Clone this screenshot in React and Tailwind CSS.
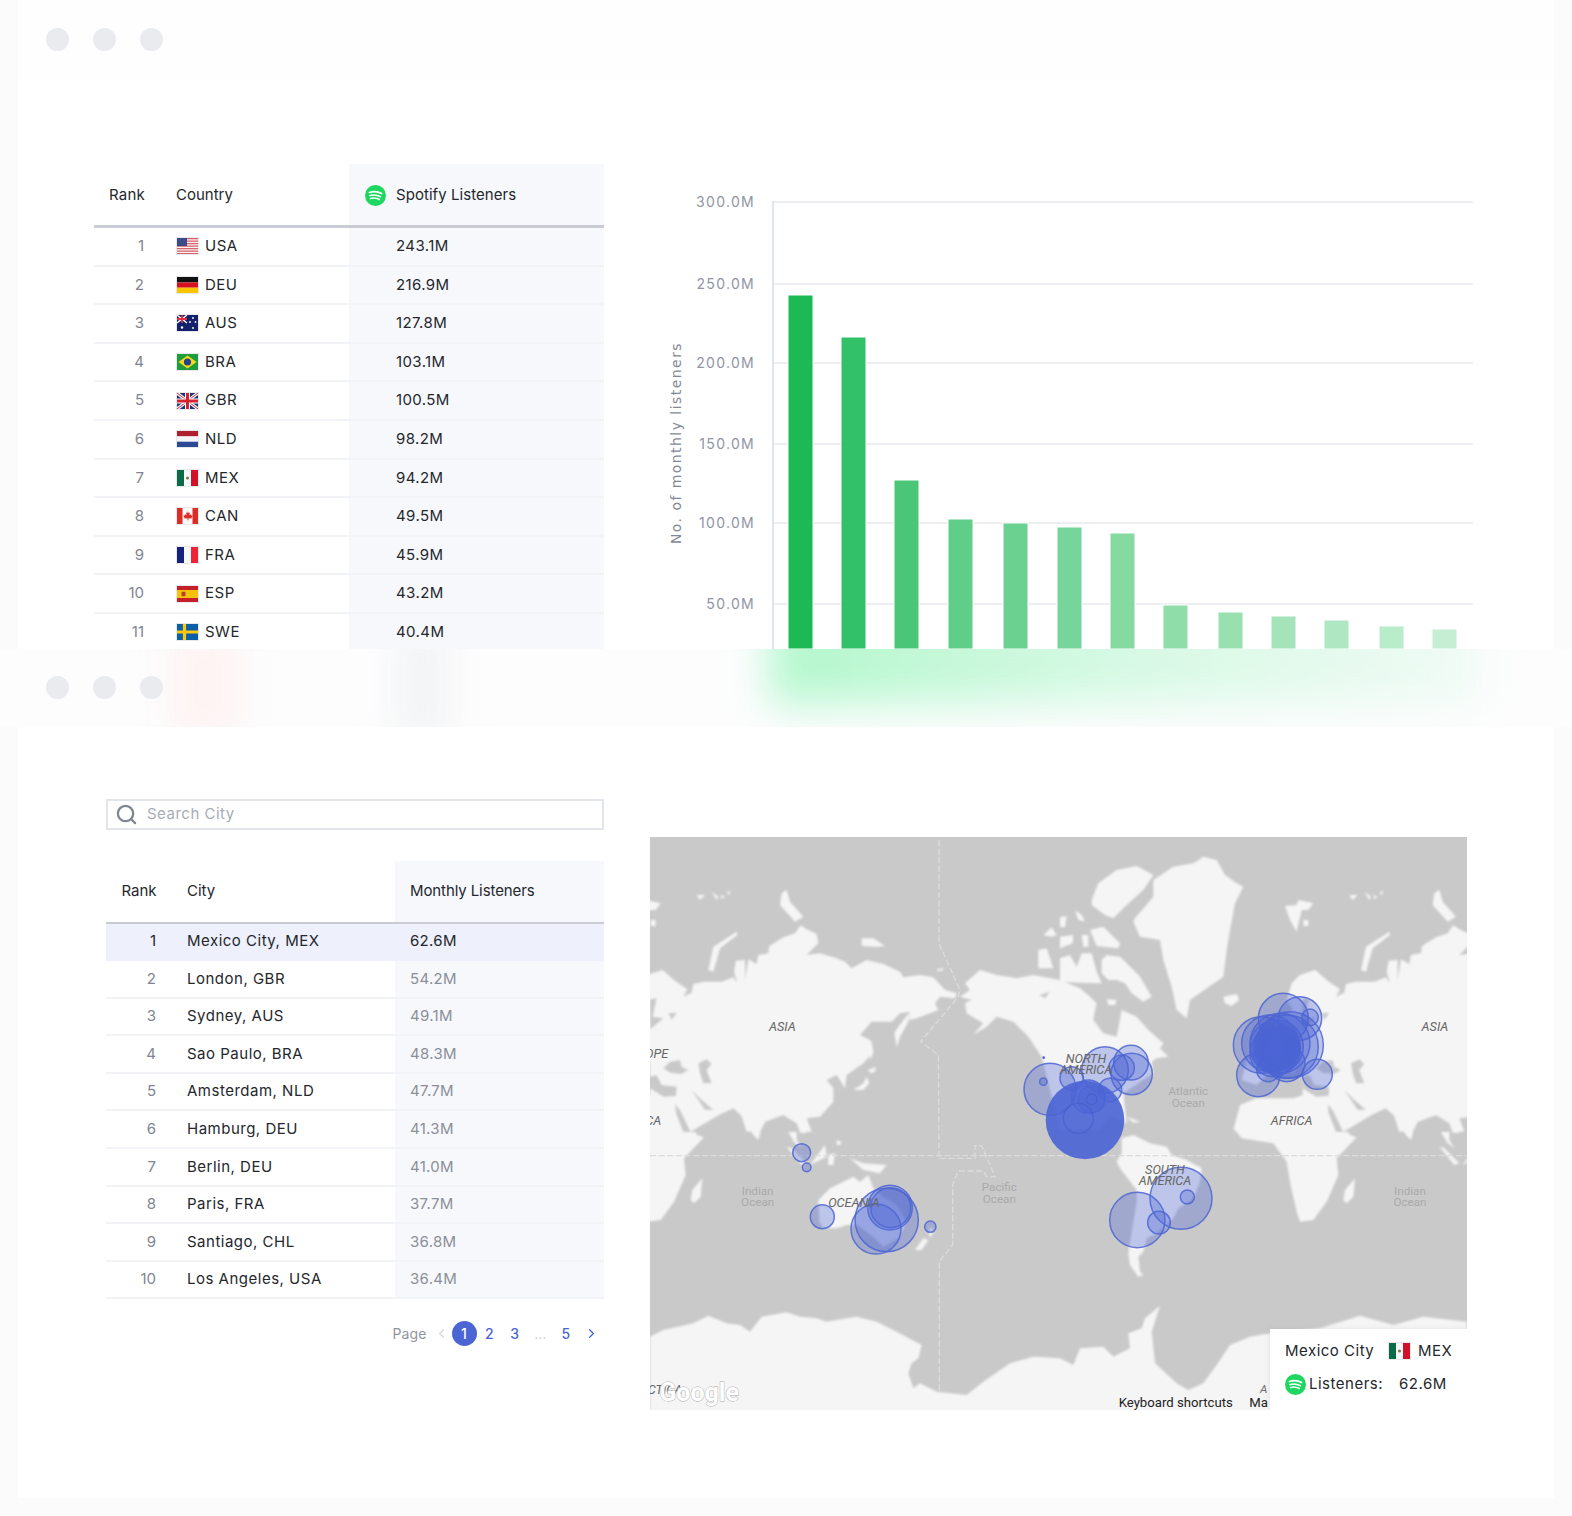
import React from 'react';
import { ChevronLeft, ChevronRight, Search } from 'lucide-react';

const COUNTRIES = [
  ['1', 'USA', '243.1M'], ['2', 'DEU', '216.9M'], ['3', 'AUS', '127.8M'], ['4', 'BRA', '103.1M'],
  ['5', 'GBR', '100.5M'], ['6', 'NLD', '98.2M'], ['7', 'MEX', '94.2M'], ['8', 'CAN', '49.5M'],
  ['9', 'FRA', '45.9M'], ['10', 'ESP', '43.2M'], ['11', 'SWE', '40.4M'],
];

const CITIES = [
  ['1', 'Mexico City, MEX', '62.6M'], ['2', 'London, GBR', '54.2M'], ['3', 'Sydney, AUS', '49.1M'],
  ['4', 'Sao Paulo, BRA', '48.3M'], ['5', 'Amsterdam, NLD', '47.7M'], ['6', 'Hamburg, DEU', '41.3M'],
  ['7', 'Berlin, DEU', '41.0M'], ['8', 'Paris, FRA', '37.7M'], ['9', 'Santiago, CHL', '36.8M'],
  ['10', 'Los Angeles, USA', '36.4M'],
];

// [x, top, colour] in page pixels
const BARS = [
  [788, 295, '#1cb954'], [841, 337, '#32c069'], [894, 480, '#4bc678'], [948, 519, '#5ece88'],
  [1003, 523, '#6bd190'], [1057, 527, '#76d59a'], [1110, 533, '#85daa2'], [1163, 605, '#8fdda9'],
  [1218, 612, '#98e0b0'], [1271, 616, '#a5e4ba'], [1324, 620, '#aee7c2'], [1379, 626, '#b8eccb'],
  [1432, 629, '#c5eed3'],
];

const TICKS = [[202, '300.0M'], [284, '250.0M'], [363, '200.0M'], [444, '150.0M'], [523, '100.0M'], [604, '50.0M']];

const Flag = ({ code }) => {
  const flags = {
    USA: (
      <>
        <rect width="21" height="16" fill="#f6f6f8" />
        {[0, 2.5, 5, 7.5, 10, 12.5].map((y) => <rect key={y} y={y} width="21" height="1.3" fill="#d9616c" />)}
        <rect y="15" width="21" height="1" fill="#d9616c" />
        <rect width="10" height="8" fill="#3d4c87" />
      </>
    ),
    DEU: (
      <>
        <rect width="21" height="5.4" fill="#111" />
        <rect y="5.4" width="21" height="5.3" fill="#d5121e" />
        <rect y="10.7" width="21" height="5.3" fill="#fbc400" />
      </>
    ),
    AUS: (
      <>
        <rect width="21" height="16" fill="#13206b" />
        <path d="M0 0l10 8M10 0L0 8" stroke="#fff" strokeWidth="1.4" />
        <path d="M5 0v8M0 4h10" stroke="#e0333f" strokeWidth="1.8" />
        <circle cx="5" cy="12.5" r="1.2" fill="#fff" />
        <circle cx="16" cy="3" r=".9" fill="#fff" />
        <circle cx="13" cy="7" r=".9" fill="#fff" />
        <circle cx="18.5" cy="7" r=".9" fill="#fff" />
        <circle cx="16" cy="13" r=".9" fill="#fff" />
      </>
    ),
    BRA: (
      <>
        <rect width="21" height="16" fill="#1f9d3d" />
        <path d="M10.5 1.5L19.5 8l-9 6.5L1.5 8z" fill="#f7d917" />
        <circle cx="10.5" cy="8" r="3.6" fill="#23418f" />
      </>
    ),
    GBR: (
      <>
        <rect width="21" height="16" fill="#1d3579" />
        <path d="M0 0l21 16M21 0L0 16" stroke="#fff" strokeWidth="3" />
        <path d="M0 0l21 16M21 0L0 16" stroke="#d5222f" strokeWidth="1" />
        <path d="M10.5 0v16M0 8h21" stroke="#fff" strokeWidth="5" />
        <path d="M10.5 0v16M0 8h21" stroke="#d5222f" strokeWidth="3" />
      </>
    ),
    NLD: (
      <>
        <rect width="21" height="5.4" fill="#ad1f2d" />
        <rect y="5.4" width="21" height="5.3" fill="#f5f5f7" />
        <rect y="10.7" width="21" height="5.3" fill="#2c4a94" />
      </>
    ),
    MEX: (
      <>
        <rect width="7" height="16" fill="#0c6b47" />
        <rect x="7" width="7" height="16" fill="#f8f8f8" />
        <rect x="14" width="7" height="16" fill="#d01128" />
        <circle cx="10.5" cy="8" r="1.6" fill="#93714a" />
      </>
    ),
    CAN: (
      <>
        <rect width="21" height="16" fill="#f8f8f8" />
        <rect width="5.5" height="16" fill="#dd2b25" />
        <rect x="15.5" width="5.5" height="16" fill="#dd2b25" />
        <path d="M10.5 3l1 2 1.4-.6-.5 2.8 1.6-1 .4 1.3 1.3.1-1 2-.3 1-3-.3.1 2h-1l.1-2-3 .3-.3-1-1-2 1.3-.1.4-1.3 1.6 1-.5-2.8 1.4.6z" fill="#dd2b25" />
      </>
    ),
    FRA: (
      <>
        <rect width="7" height="16" fill="#13237e" />
        <rect x="7" width="7" height="16" fill="#f8f8f8" />
        <rect x="14" width="7" height="16" fill="#ee2436" />
      </>
    ),
    ESP: (
      <>
        <rect width="21" height="16" fill="#c5202a" />
        <rect y="4" width="21" height="8" fill="#f5c20b" />
        <rect x="4.5" y="5.8" width="4" height="4.4" rx="1" fill="#b0442b" />
      </>
    ),
    SWE: (
      <>
        <rect width="21" height="16" fill="#0a5fa8" />
        <path d="M0 8h21M7.5 0v16" stroke="#fcc90f" strokeWidth="3.2" />
      </>
    ),
  };
  return (
    <svg width="21" height="16" viewBox="0 0 21 16" className="shrink-0 outline outline-1 outline-[#e8e9ec]">
      {flags[code]}
    </svg>
  );
};

const SpotifyIcon = ({ className }) => (
  <svg viewBox="0 0 21 21" className={className}>
    <circle cx="10.5" cy="10.5" r="10.5" fill="#1ed760" />
    <path d="M4.4 7.4c4-1.2 8.6-.9 12.2 1.1M5 10.6c3.4-1 7.3-.6 10.4 1.1M5.6 13.5c2.9-.8 6-.5 8.6 1" fill="none" stroke="#fff" strokeWidth="1.6" strokeLinecap="round" />
  </svg>
);

const WindowDots = () => (
  <div className="flex gap-[24px]">
    <span className="w-[23px] h-[23px] rounded-full bg-[#e9ebee]" />
    <span className="w-[23px] h-[23px] rounded-full bg-[#e9ebee]" />
    <span className="w-[23px] h-[23px] rounded-full bg-[#e9ebee]" />
  </div>
);

const CountryTable = () => (
  <div className="w-[510px] h-[485px] overflow-hidden text-[15px] text-[#24272c]">
    <div className="flex h-[64px] border-b-[3px] border-[#c9cdd3] items-stretch">
      <div className="w-[51px] text-right flex items-center justify-end pt-[2px] tracking-[0.2px]">Rank</div>
      <div className="w-[204px] pl-[31px] flex items-center pt-[2px]">Country</div>
      <div className="flex-1 bg-[#f7f8fc] flex items-center pl-[16px] gap-[10px] pt-[2px] tracking-[0.05px]">
        <SpotifyIcon className="w-[21px] h-[21px]" />
        <span>Spotify Listeners</span>
      </div>
    </div>
    {COUNTRIES.map(([rank, code, value]) => (
      <div key={code} className="flex h-[38.6px] border-b-2 border-[#f2f3f6] items-stretch">
        <div className="w-[50px] flex items-center justify-end text-[#7f8591]">{rank}</div>
        <div className="w-[205px] pl-[33px] flex items-center gap-[7px]">
          <Flag code={code} />
          <span className="tracking-[0.5px]">{code}</span>
        </div>
        <div className="flex-1 bg-[#f7f8fc] flex items-center pl-[47px] tracking-[0.4px]">{value}</div>
      </div>
    ))}
  </div>
);

const BarChart = () => (
  <svg width="840" height="479" viewBox="660 170 840 479" className="shrink-0 mt-[6px]">
    {TICKS.map(([y, label]) => (
      <g key={label}>
        <line x1="773" x2="1473" y1={y} y2={y} stroke="#eceef2" strokeWidth="2" />
        <text x="755" y={y + 5} textAnchor="end" fontFamily="Inter, sans-serif" fontSize="14" letterSpacing="1.3" fill="#8f95a3">{label}</text>
      </g>
    ))}
    <line x1="773" x2="773" y1="201" y2="649" stroke="#d5dcf0" strokeWidth="1.5" />
    {BARS.map(([x, top, color]) => (
      <rect key={x} x={x} y={top} width="25" height={649 - top} fill={color} stroke="#fff" strokeWidth="1" />
    ))}
    <text transform="translate(681 443) rotate(-90)" textAnchor="middle" fontFamily="'DejaVu Sans', sans-serif" fontSize="14" letterSpacing="1.45" fill="#838994">No. of monthly listeners</text>
  </svg>
);

const CityTable = () => (
  <div className="w-[498px] text-[15px] text-[#24272c]">
    <div className="flex h-[62.5px] border-b-2 border-[#c9cdd3] items-stretch">
      <div className="w-[50.5px] flex items-center justify-end">Rank</div>
      <div className="w-[238.5px] pl-[30.5px] flex items-center">City</div>
      <div className="flex-1 bg-[#f7f8fc] flex items-center pl-[15px] tracking-[-0.1px]">Monthly Listeners</div>
    </div>
    {CITIES.map(([rank, city, value], i) => (
      <div key={rank} className={`flex h-[37.6px] border-b-2 items-stretch ${i === 0 ? 'bg-[#eef0fb] border-[#eef0fb]' : 'border-[#f2f3f6]'}`}>
        <div className={`w-[50px] flex items-center justify-end ${i === 0 ? 'text-[#24272c]' : 'text-[#7f8591]'}`}>{rank}</div>
        <div className="w-[239px] pl-[31px] flex items-center tracking-[0.5px]">{city}</div>
        <div className={`flex-1 flex items-center pl-[15px] tracking-[0.3px] ${i === 0 ? 'text-[#24272c]' : 'bg-[#f7f8fc] text-[#8a8f98]'}`}>{value}</div>
      </div>
    ))}
  </div>
);

const Pagination = () => (
  <div className="flex items-center justify-end mt-[21px] h-[26px] text-[14px] font-medium text-[#4c65d4]">
    <span className="text-[#8f95a0] font-normal tracking-[0.1px] mr-[5px]">Page</span>
    <span className="w-[20px] flex justify-center text-[#d3d6dc]"><ChevronLeft size={15} /></span>
    <span className="w-[25px] h-[25px] rounded-full bg-[#4c65d4] text-white flex items-center justify-center">1</span>
    <span className="w-[25.5px] flex justify-center">2</span>
    <span className="w-[25.5px] flex justify-center">3</span>
    <span className="w-[25.5px] flex justify-center text-[#c9ced8] font-normal">...</span>
    <span className="w-[25.5px] flex justify-center">5</span>
    <span className="w-[25.5px] flex justify-center"><ChevronRight size={15} /></span>
  </div>
);

const LAND = '#f5f5f5';
const SEA = '#c9c9c9';

// everything below is in zoomed units: 3 units to a page pixel, origin at the map's top left
const Eurasia = () => (
  <g fill={LAND}>
    <path d="M0 405L40 392L70 420L112 448L100 470L125 458L130 432L160 425L215 425L250 412L262 430L252 395L258 362L285 360L285 420L295 358L320 372L325 345L355 340L358 318L400 292L435 280L452 256L470 268L500 282L505 310L470 345L510 340L560 355L585 365L605 385L650 360L700 372L750 395L760 412L810 405L850 412L885 450L920 460L915 475L870 470L855 490L865 510L800 535L778 540L780 515L750 520L725 545L665 545L630 585L660 600L670 635L640 670L590 705L585 745L560 705L530 720L550 745L550 785L510 830L470 835L485 875L0 875Z" />
    <path d="M780 515L775 545L750 590L740 622L733 578L745 560Z" />
    <path d="M655 690L678 680L675 695L660 700Z" />
    <path d="M650 710L658 730L640 750L610 750L640 730Z" />
    <path d="M657 600L665 605L670 640L660 660Z" />
    <path d="M175 390L190 320L260 275L262 285L210 325L190 395Z" />
    <path d="M395 160L410 150L420 185L460 230L435 245L390 195Z" />
    <path d="M635 295L670 295L705 318L680 320L635 318Z" />
    <path d="M860 388L880 385L878 392L862 393Z" />
    <path d="M140 165L165 165L150 180ZM185 155L205 170L200 180ZM212 165L225 170L215 178ZM232 155L242 152L235 168Z" />
    <path d="M405 855L470 855L480 865L465 880L440 875L440 900L455 925L435 910L420 885Z" />
    <path d="M280 835L345 835L335 865L325 900L310 885Z" />
    <path d="M410 920L425 925L470 970L455 975Z" />
    <path d="M480 975L525 915L530 950L490 970Z" />
    <path d="M535 945L555 940L550 975L535 975Z" />
    <path d="M560 900L575 905L570 915L560 915Z" />
    <path d="M600 955L640 970L710 975L690 1000L640 990Z" />
    <path d="M505 1080L540 1045L580 1025L610 1010L630 1025L655 1005L670 1045L700 1070L740 1095L770 1145L745 1195L700 1220L680 1200L650 1175L620 1155L590 1155L560 1165L520 1165L508 1145Z" />
    <path d="M795 1230L820 1195L835 1200L815 1230Z" />
    <path d="M838 1160L850 1165L845 1190L838 1190Z" />
  </g>
);

const EurasiaSeas = () => (
  <g fill={SEA}>
    <path d="M40 685L60 665L90 660L95 680L115 690L95 702L60 698Z" />
    <path d="M145 670L170 658L185 672L170 690L185 730L160 730L150 700Z" />
    <path d="M0 710L20 705L35 735L80 740L78 768L40 770L0 745Z" />
    <path d="M75 792L90 810L122 876L100 876L78 820Z" />
    <path d="M125 750L150 775L190 810L165 810L145 780Z" />
    <path d="M120 876L212 822L250 805L275 828L290 876Z" />
    <path d="M330 876L345 845L400 825L440 850L450 876Z" />
    <path d="M0 478L20 475L8 530L40 535L5 565L0 565Z" />
    <path d="M55 520L80 518L65 540Z" />
  </g>
);

const EuropeAfrica = () => (
  <g fill={LAND}>
    <path d="M695 430L720 405L765 390L800 420L838 450L815 465L775 450L745 470L740 500L700 510L680 480Z" />
    <path d="M700 510L760 480L800 490L830 470L860 470L860 700L780 690L760 660L730 660L700 700L640 690L590 735L545 720L560 660L620 620L650 540Z" />
    <path d="M490 470L530 462L538 480L515 498L495 490Z" />
    <path d="M675 198L710 195L715 180L760 190L745 210L725 210L710 275L690 240Z" />
    <path d="M730 240L745 240L745 258L730 258Z" />
    <path d="M520 870L540 795L590 775L700 775L745 760L800 790L850 855L870 885L890 892L830 955L835 1005L800 1085L760 1140L720 1145L710 1115L690 1025L680 965L640 910L610 905L545 895L525 870Z" />
    <path d="M855 1050L885 1015L880 1070L860 1090L850 1080Z" />
  </g>
);

const Americas = () => (
  <g fill={LAND}>
    {/* Alaska, Canada and the USA down to the Mexican coast */}
    <path d="M945 430L990 390L1040 405L1100 415L1150 405L1230 420L1290 445L1320 470L1340 490L1335 510L1330 540L1360 580L1400 590L1415 510L1460 530L1495 570L1540 610L1530 625L1555 650L1520 655L1505 665L1510 700L1420 760L1430 850L1380 830L1350 870L1230 870L1205 770L1175 650L1135 590L1090 545L1040 530L1010 560L970 585L1000 550L950 520L945 490L965 480L930 470L960 450Z" />
    {/* arctic islands */}
    <path d="M1165 330L1190 325L1210 385L1165 385Z" />
    <path d="M1180 285L1205 262L1220 285L1205 290Z" />
    <path d="M1230 355L1260 345L1280 380L1295 340L1325 340L1340 395L1355 430L1290 428L1230 425Z" />
    <path d="M1355 360L1370 345L1410 350L1445 385L1470 410L1505 470L1480 485L1445 460L1425 430L1400 420L1375 420L1355 400Z" />
    <path d="M1370 478L1400 480L1395 495L1375 495Z" />
    <path d="M1325 180L1345 130L1400 90L1460 78L1510 105L1480 150L1430 195L1390 235L1365 225L1325 195Z" />
    <path d="M1455 235L1510 170L1510 120L1570 80L1630 70L1660 50L1700 60L1725 105L1760 130L1780 140L1755 190L1740 270L1730 330L1720 410L1620 480L1610 535L1580 510L1565 440L1540 360L1530 300L1470 290L1450 245Z" />
    <path d="M1275 210L1295 225L1305 245L1285 240Z" />
    <path d="M1230 232L1250 228L1245 262L1230 260Z" />
    <path d="M1295 285L1315 285L1315 320L1300 320Z" />
    <path d="M1230 290L1270 285L1268 310L1230 325Z" />
    <path d="M1320 270L1360 260L1410 310L1405 325L1340 318Z" />
    <path d="M1430 830L1470 845L1450 848Z" />
    {/* South America */}
    <path d="M1415 895L1450 885L1500 910L1550 920L1565 945L1610 960L1655 985L1650 1025L1630 1075L1585 1105L1570 1135L1520 1180L1490 1195L1480 1235L1465 1250L1470 1295L1480 1305L1465 1310L1440 1275L1435 1240L1445 1175L1460 1085L1460 1050L1410 985L1400 965L1415 940Z" />
    <path d="M1168 465L1200 455L1185 475Z" fill={SEA} />
  </g>
);

const Antarctica = () => (
  <g fill={LAND}>
    <path d="M0 1490L40 1470L130 1450L175 1427L230 1450L270 1455L300 1475L335 1430L410 1417L450 1430L500 1435L530 1445L590 1435L620 1430L680 1445L740 1475L815 1515L805 1555L785 1570L775 1600L790 1645L810 1630L860 1655L950 1665L1000 1625L1080 1570L1150 1550L1230 1555L1270 1575L1290 1525L1360 1520L1390 1550L1440 1525L1435 1480L1475 1465L1485 1435L1530 1397L1505 1475L1515 1570L1580 1630L1615 1650L1660 1630L1700 1575L1740 1515L1800 1490L1860 1480L2010 1465L2130 1427L2230 1455L2320 1430L2450 1445L2450 1720L0 1720Z" />
  </g>
);

const CIRCLES = [
  [1200, 748, 78], [1180, 725, 11],
  [1365, 690, 70], [1443, 668, 52], [1445, 702, 62], [1415, 683, 38], [1380, 750, 35], [1265, 715, 35],
  [1315, 770, 50], [1325, 778, 40],
  [1900, 535, 75], [1950, 535, 65], [1980, 532, 25], [1825, 705, 65], [2002, 703, 45],
  [1835, 615, 85], [1860, 610, 85], [1880, 620, 80], [1910, 620, 95], [1920, 615, 100], [1890, 610, 90],
  [1870, 640, 70], [1855, 690, 35], [1910, 670, 55], [1880, 620, 70], [1890, 620, 60], [1880, 625, 55],
  [1880, 625, 50], [1885, 620, 45], [1880, 620, 60], [1885, 625, 40], [1880, 620, 50], [1895, 635, 55],
  [1875, 610, 48], [1895, 610, 50], [1885, 640, 45], [1880, 625, 42], [1890, 630, 48], [1875, 630, 38], [1885, 615, 36],
  [455, 938, 27], [470, 982, 13], [517, 1130, 36], [720, 1103, 67], [710, 1140, 95], [678, 1167, 75],
  [722, 1103, 60], [841, 1160, 17],
  [1462, 1140, 83], [1593, 1075, 93], [1527, 1148, 34], [1612, 1071, 21],
];

const MapLabel = ({ x, y, children, ocean }) => (
  <text
    x={x}
    y={y}
    textAnchor="middle"
    fontFamily="Roboto, sans-serif"
    fontSize={ocean ? 35 : 38}
    fontStyle={ocean ? 'normal' : 'italic'}
    fill={ocean ? '#a9a9a9' : '#666'}
  >
    {children}
  </text>
);

const WorldMap = () => (
  <div className="relative w-[817px] h-[573px] bg-[#c9c9c9] overflow-hidden shrink-0">
    <svg viewBox="650 837 817 573" className="w-full h-full block">
      <defs>
        <filter id="soft" x="-5%" y="-5%" width="110%" height="110%">
          <feGaussianBlur stdDeviation="2.6" />
        </filter>
      </defs>
      <g transform="translate(650 840) scale(0.33333)">
        <g filter="url(#soft)">
          <Antarctica />
          <Eurasia />
          <g transform="translate(1958 0)"><Eurasia /></g>
          <g transform="translate(1230 0)"><EuropeAfrica /></g>
          <g transform="translate(-728 0)"><EuropeAfrica /></g>
          <Americas />
          <EurasiaSeas />
          <g transform="translate(1958 0)"><EurasiaSeas /></g>
        </g>
        <path
          d="M867 0V310L930 450L925 470L812 605L865 645L867 955H975V917H995L1035 1010H1010L1000 993H925L908 1035V1215L868 1265V1655M0 947H2450"
          fill="none"
          stroke="#dcdcdc"
          strokeWidth="4"
          strokeDasharray="18 8"
        />
        <circle cx="1181" cy="653" r="4" fill="#4c65d4" />
        {CIRCLES.map(([cx, cy, r], i) => (
          <circle key={i} cx={cx} cy={cy} r={r} fill="#4c65d4" fillOpacity="0.33" stroke="#4c65d4" strokeOpacity="0.85" strokeWidth="4.5" />
        ))}
        <circle cx="1305" cy="840" r="118" fill="#4c65d4" fillOpacity="0.92" />
        <circle cx="1285" cy="835" r="45" fill="none" stroke="#3f57c4" strokeOpacity="0.45" strokeWidth="4" />
        <circle cx="1325" cy="778" r="16" fill="none" stroke="#3f57c4" strokeOpacity="0.5" strokeWidth="4" />
        <MapLabel x={397} y={572}>ASIA</MapLabel>
        <MapLabel x={2355} y={572}>ASIA</MapLabel>
        <MapLabel x={20} y={654}>OPE</MapLabel>
        <MapLabel x={10} y={855}>CA</MapLabel>
        <MapLabel x={1308} y={668}>NORTH</MapLabel>
        <MapLabel x={1308} y={703}>AMERICA</MapLabel>
        <MapLabel x={1925} y={855}>AFRICA</MapLabel>
        <MapLabel x={612} y={1100}>OCEANIA</MapLabel>
        <MapLabel x={1545} y={1001}>SOUTH</MapLabel>
        <MapLabel x={1545} y={1036}>AMERICA</MapLabel>
        <MapLabel x={45} y={1661}>CTICA</MapLabel>
        <MapLabel ocean x={1615} y={765}>Atlantic</MapLabel>
        <MapLabel ocean x={1615} y={800}>Ocean</MapLabel>
        <MapLabel ocean x={323} y={1064}>Indian</MapLabel>
        <MapLabel ocean x={323} y={1099}>Ocean</MapLabel>
        <MapLabel ocean x={2280} y={1064}>Indian</MapLabel>
        <MapLabel ocean x={2280} y={1099}>Ocean</MapLabel>
        <MapLabel ocean x={1048} y={1053}>Pacific</MapLabel>
        <MapLabel ocean x={1048} y={1088}>Ocean</MapLabel>
        <text x="28" y="1682" fontFamily="Roboto, sans-serif" fontWeight="700" fontSize="75" fill="#fff" stroke="#a8a8a8" strokeWidth="2.5" paintOrder="stroke">Google</text>
        <text x="1406" y="1700" fontFamily="Roboto, sans-serif" fontSize="39.5" fill="#222">Keyboard shortcuts</text>
        <text x="1798" y="1700" fontFamily="Roboto, sans-serif" fontSize="39.5" fill="#222">Ma</text>
        <text x="1830" y="1660" fontFamily="Roboto, sans-serif" fontStyle="italic" fontSize="35" fill="#6d6d6d">A</text>
      </g>
    </svg>
    <div className="absolute right-0 bottom-0 w-[197px] h-[81px] bg-white shadow-[0_1px_6px_rgba(120,125,140,0.18)] pl-[15px] pt-[11px] text-[15px] tracking-[0.5px] text-[#24272c]">
      <div className="flex items-center h-[22px]">
        <span className="w-[104px]">Mexico City</span>
        <Flag code="MEX" />
        <span className="ml-[8px]">MEX</span>
      </div>
      <div className="flex items-center mt-[11px] h-[22px]">
        <SpotifyIcon className="w-[21px] h-[21px] shrink-0" />
        <span className="ml-[3px] w-[90px]">Listeners:</span>
        <span>62.6M</span>
      </div>
    </div>
  </div>
);

export default function App() {
  return (
    <div className="w-[1572px] h-[1516px] bg-[#fbfbfc] overflow-hidden font-['Inter',sans-serif]">
      <div className="mx-[18px] h-[649px] bg-white flex flex-col overflow-hidden">
        <div className="h-[80px] shrink-0 bg-[#fefefe] pl-[28px] pt-[28px]">
          <WindowDots />
        </div>
        <div className="flex pt-[84px] pl-[76px] gap-[56px]">
          <CountryTable />
          <BarChart />
        </div>
      </div>

      {/* frosted title bar of the second window, with the blurred first window behind it */}
      <div className="relative h-[78px] bg-[#fdfdfe] overflow-hidden pl-[46px] pt-[27px]">
        <div className="absolute left-[170px] top-[-20px] w-[70px] h-[110px] bg-[#fef3f3] blur-[18px]" />
        <div className="absolute left-[395px] top-[-20px] w-[55px] h-[110px] bg-[#f3f4f5] blur-[16px]" />
        <div className="absolute left-[770px] top-[-40px] w-[710px] h-[95px] bg-gradient-to-r from-[#b2f7cc] via-[#d6f9e4] to-[#f0fbf5] blur-[20px]" />
        <div className="relative">
          <WindowDots />
        </div>
      </div>

      <div className="mx-[18px] h-[771px] bg-white flex pt-[72px] pl-[88px] gap-[46px]">
        <div className="w-[498px] shrink-0">
          <div className="h-[31px] border-2 border-[#e2e5ea] flex items-center pl-[7px] gap-[9px] text-[15px] tracking-[0.5px] text-[#a8adb5]">
            <Search size={23} strokeWidth={2.4} className="text-[#80868f]" />
            <span>Search City</span>
          </div>
          <div className="mt-[31px]">
            <CityTable />
          </div>
          <Pagination />
        </div>
        <div className="pt-[38px]">
          <WorldMap />
        </div>
      </div>
    </div>
  );
}
